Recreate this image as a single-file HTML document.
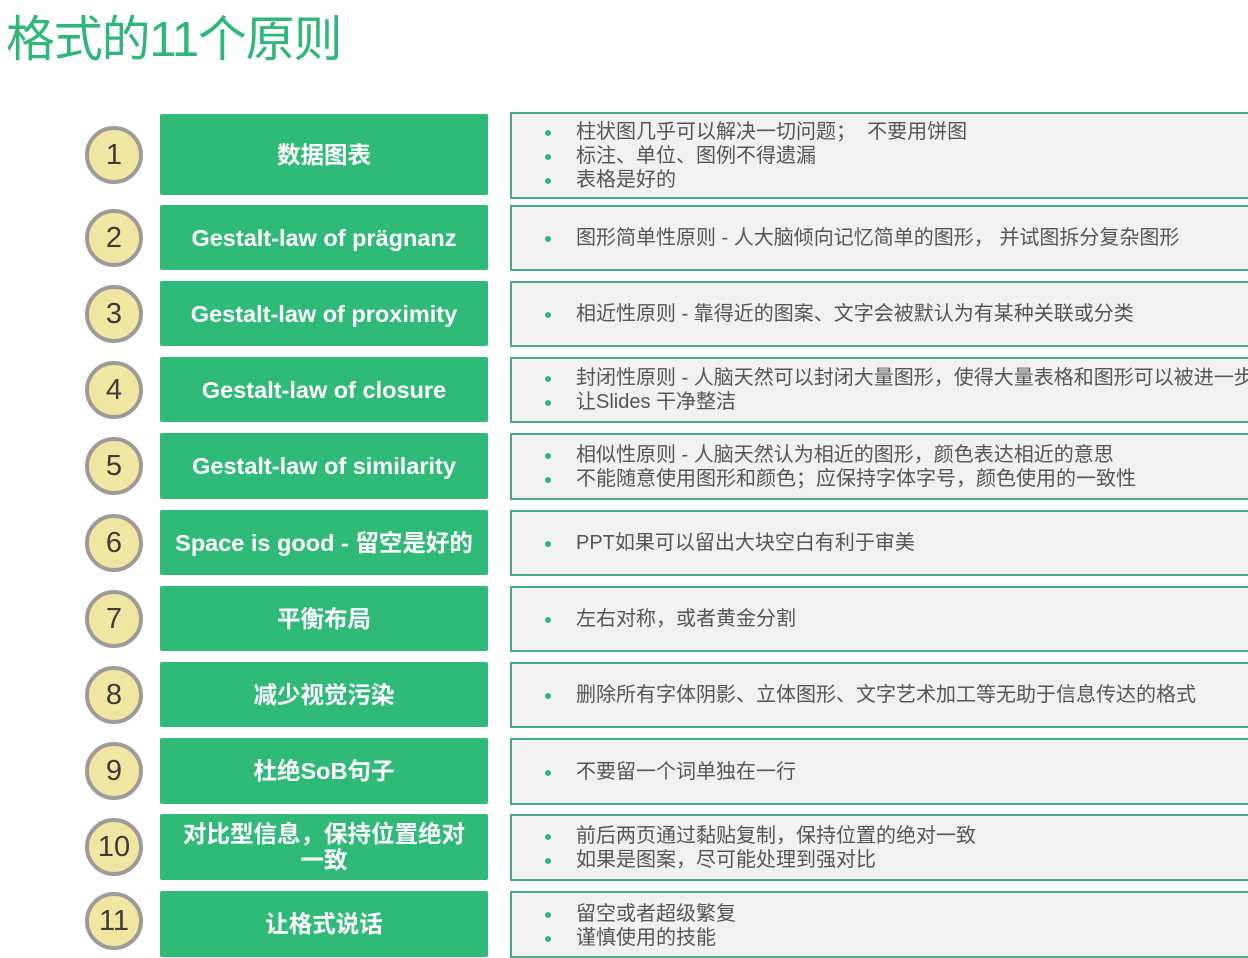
<!DOCTYPE html>
<html><head><meta charset="utf-8"><style>
*{margin:0;padding:0;box-sizing:border-box}
body{width:1248px;height:945px;background:#fff;position:relative;overflow:hidden;font-family:"Liberation Sans","Noto Sans CJK SC",sans-serif}
.t{position:absolute;left:6px;top:10px;font-size:49px;color:#2fb77a;letter-spacing:-1.2px;line-height:60px}
.c{position:absolute;left:85px;width:58px;height:58px;border-radius:50%;background:#efe6a2;border:4px solid #9e9a98;color:#3e3a38;font-size:29px;text-align:center;line-height:50px}
.g{position:absolute;left:160px;width:328px;background:#2fba78;color:#fff;font-weight:bold;font-size:23.5px;display:flex;align-items:center;justify-content:center;text-align:center;line-height:26px;border-radius:2px;padding:0 18px}
.r{position:absolute;left:510px;width:760px;background:#f1f1f1;border:2px solid #4aa98a;display:flex;flex-direction:column;justify-content:center;padding-left:64px;color:#555;font-size:20px;line-height:24px;white-space:nowrap}
.r div{position:relative}
.r div:before{content:"";position:absolute;left:-31px;top:10px;width:6px;height:6px;border-radius:50%;background:#2fb77a}
</style></head><body>
<div class="t">格式的11个原则</div>

<div class="c" style="top:126px">1</div>
<div class="g" style="top:114px;height:81px">数据图表</div>
<div class="r" style="top:112px;height:87px"><div>柱状图几乎可以解决一切问题；&nbsp; 不要用饼图</div><div>标注、单位、图例不得遗漏</div><div>表格是好的</div></div>

<div class="c" style="top:209px">2</div>
<div class="g" style="top:205px;height:65px">Gestalt-law of prägnanz</div>
<div class="r" style="top:205px;height:66px"><div>图形简单性原则 - 人大脑倾向记忆简单的图形，&nbsp;并试图拆分复杂图形</div></div>

<div class="c" style="top:285px">3</div>
<div class="g" style="top:281px;height:65px">Gestalt-law of proximity</div>
<div class="r" style="top:281px;height:66px"><div>相近性原则 - 靠得近的图案、文字会被默认为有某种关联或分类</div></div>

<div class="c" style="top:361px">4</div>
<div class="g" style="top:357px;height:65px">Gestalt-law of closure</div>
<div class="r" style="top:357px;height:66px"><div>封闭性原则 - 人脑天然可以封闭大量图形，使得大量表格和图形可以被进一步</div><div>让Slides 干净整洁</div></div>

<div class="c" style="top:437px">5</div>
<div class="g" style="top:433px;height:66px">Gestalt-law of similarity</div>
<div class="r" style="top:433px;height:67px"><div>相似性原则 - 人脑天然认为相近的图形，颜色表达相近的意思</div><div>不能随意使用图形和颜色；应保持字体字号，颜色使用的一致性</div></div>

<div class="c" style="top:514px">6</div>
<div class="g" style="top:510px;height:65px;padding:0 4px">Space is good - 留空是好的</div>
<div class="r" style="top:510px;height:66px"><div>PPT如果可以留出大块空白有利于审美</div></div>

<div class="c" style="top:590px">7</div>
<div class="g" style="top:586px;height:65px">平衡布局</div>
<div class="r" style="top:586px;height:66px"><div>左右对称，或者黄金分割</div></div>

<div class="c" style="top:666px">8</div>
<div class="g" style="top:662px;height:65px">减少视觉污染</div>
<div class="r" style="top:662px;height:66px"><div>删除所有字体阴影、立体图形、文字艺术加工等无助于信息传达的格式</div></div>

<div class="c" style="top:742px">9</div>
<div class="g" style="top:738px;height:66px">杜绝SoB句子</div>
<div class="r" style="top:738px;height:67px"><div>不要留一个词单独在一行</div></div>

<div class="c" style="top:818px">10</div>
<div class="g" style="top:814px;height:66px;padding:0 18px">对比型信息，保持位置绝对<br>一致</div>
<div class="r" style="top:814px;height:67px"><div>前后两页通过黏贴复制，保持位置的绝对一致</div><div>如果是图案，尽可能处理到强对比</div></div>

<div class="c" style="top:892px">11</div>
<div class="g" style="top:891px;height:66px">让格式说话</div>
<div class="r" style="top:891px;height:67px;justify-content:flex-start;padding-top:9px"><div>留空或者超级繁复</div><div>谨慎使用的技能</div></div>
</body></html>
